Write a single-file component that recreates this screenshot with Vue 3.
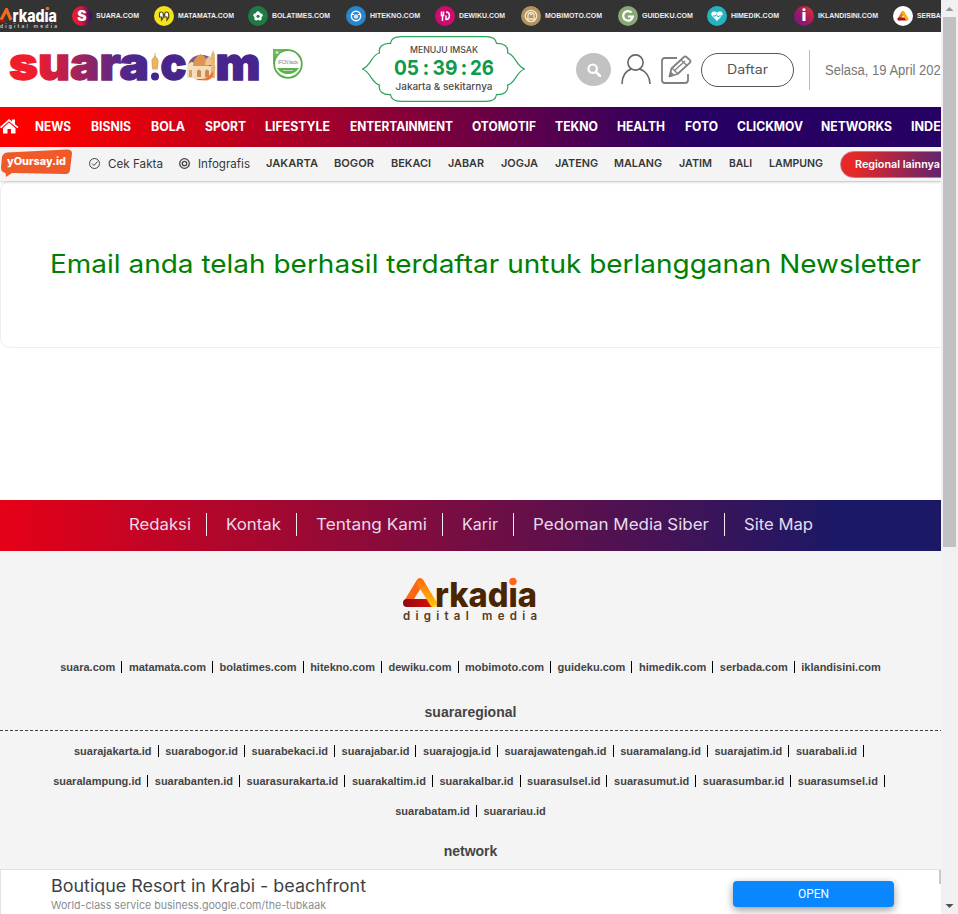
<script setup>
import { h } from 'vue'

// One line of text set to an exact width.
const Fit = (p) =>
  h('svg', { width: p.w, height: p.h || 20, style: 'display:block;overflow:visible;flex:none' }, [
    h('text', { x: 0, y: p.y || 14, textLength: p.w, lengthAdjust: 'spacingAndGlyphs', fill: 'currentColor' }, p.t),
  ])
Fit.props = ['t', 'w', 'h', 'y']

const network = [
  { t: 'SUARA.COM', w: 43, cell: 82, k: 'suara' },
  { t: 'MATAMATA.COM', w: 56, cell: 94, k: 'mata' },
  { t: 'BOLATIMES.COM', w: 58, cell: 98, k: 'bola' },
  { t: 'HITEKNO.COM', w: 50, cell: 89, k: 'hitekno' },
  { t: 'DEWIKU.COM', w: 46, cell: 86, k: 'dewiku' },
  { t: 'MOBIMOTO.COM', w: 57, cell: 97, k: 'mobi' },
  { t: 'GUIDEKU.COM', w: 51, cell: 89, k: 'guide' },
  { t: 'HIMEDIK.COM', w: 48, cell: 87, k: 'himedik' },
  { t: 'IKLANDISINI.COM', w: 60, cell: 99, k: 'iklan' },
  { t: 'SERBADA.COM', w: 51, cell: 90, k: 'serbada' },
]
const fills = {
  suara: 'url(#gs)', mata: '#f6e21c', bola: '#1f7a45', hitekno: '#2a86cc', dewiku: '#cf0a72',
  mobi: '#b3935c', guide: '#8aa873', himedik: '#25b3bd', iklan: 'url(#gi)', serbada: '#fff',
}
const nav = [
  ['NEWS', 36, 56], ['BISNIS', 40, 60], ['BOLA', 34, 54], ['SPORT', 41, 60], ['LIFESTYLE', 65, 85],
  ['ENTERTAINMENT', 103, 122], ['OTOMOTIF', 64, 83], ['TEKNO', 43, 62], ['HEALTH', 48, 68],
  ['FOTO', 33, 52], ['CLICKMOV', 66, 84], ['NETWORKS', 71, 90], ['INDEKS', 47, 60],
]
const regions = [
  ['JAKARTA', 52, 68], ['BOGOR', 40, 57], ['BEKACI', 40, 57], ['JABAR', 36, 53], ['JOGJA', 37, 54],
  ['JATENG', 43, 59], ['MALANG', 48, 65], ['JATIM', 33, 50], ['BALI', 23, 40], ['LAMPUNG', 54, 71],
]
const info = [['Redaksi', 62], ['Kontak', 55], ['Tentang Kami', 111], ['Karir', 36], ['Pedoman Media Siber', 176], ['Site Map', 69]]
const sites = ['suara.com', 'matamata.com', 'bolatimes.com', 'hitekno.com', 'dewiku.com', 'mobimoto.com', 'guideku.com', 'himedik.com', 'serbada.com', 'iklandisini.com']
const regional = [
  ['suarajakarta.id', 'suarabogor.id', 'suarabekaci.id', 'suarajabar.id', 'suarajogja.id', 'suarajawatengah.id', 'suaramalang.id', 'suarajatim.id', 'suarabali.id'],
  ['suaralampung.id', 'suarabanten.id', 'suarasurakarta.id', 'suarakaltim.id', 'suarakalbar.id', 'suarasulsel.id', 'suarasumut.id', 'suarasumbar.id', 'suarasumsel.id'],
  ['suarabatam.id', 'suarariau.id'],
]
</script>

<template>
  <div class="window">
    <div class="page">
      <div class="topbar">
        <svg class="toplogo" width="58" height="24" viewBox="0 0 58 24">
          <path d="M1 15 6.500 4.500 11 15" fill="none" stroke="#f26a1d" stroke-width="3.200" stroke-linejoin="round" />
          <path d="M-1 16H5" stroke="#b3130b" stroke-width="2.500" />
          <text x="12.500" y="16.500" class="heavy" font-size="17" textLength="44.500" lengthAdjust="spacingAndGlyphs" fill="#fff">rkadıa</text>
          <circle cx="47.500" cy="3.500" r="1.800" fill="#f26a1d" />
          <text x="0" y="23" class="small" font-size="5" textLength="57" fill="#ccc">digital media</text>
        </svg>
        <div v-for="n in network" :key="n.k" class="net" :style="{ width: n.cell + 'px' }">
          <svg width="20" height="20" viewBox="0 0 20 20">
            <defs>
              <linearGradient id="gs"><stop stop-color="#f01c2c" /><stop offset=".45" stop-color="#d81940" /><stop offset="1" stop-color="#271064" /></linearGradient>
              <linearGradient id="gi" x1="0" y1="1" x2="1" y2="0"><stop stop-color="#6b178d" /><stop offset=".5" stop-color="#a3195f" /><stop offset="1" stop-color="#ef3527" /></linearGradient>
            </defs>
            <circle cx="10" cy="10" r="10" :fill="fills[n.k]" />
            <text v-if="n.k === 'suara'" x="10" y="15" class="glyph" font-size="14">S</text>
            <g v-else-if="n.k === 'mata'">
              <path d="M5.500 7.500q0-1.500 1.800-1.500T9.300 8v3.500L7.500 14V11H5.500zM10.700 7.500q0-1.500 1.800-1.500T14.700 8v3.500L13 14V11h-2.300z" fill="#fff" stroke="#4b4718" stroke-width="1.200" />
            </g>
            <g v-else-if="n.k === 'bola'" fill="#fff">
              <circle cx="10" cy="7.300" r="2" /><circle cx="12.700" cy="9.200" r="2" /><circle cx="11.700" cy="12.500" r="2" /><circle cx="8.300" cy="12.500" r="2" /><circle cx="7.300" cy="9.200" r="2" />
              <circle cx="10" cy="10.200" r="1.500" fill="#1f7a45" />
            </g>
            <g v-else-if="n.k === 'hitekno'" fill="none" stroke="#fff">
              <circle cx="10" cy="10" r="4.700" stroke-width="1.500" /><circle cx="10" cy="10.500" r="2.300" fill="#cfe6f7" stroke="none" /><path d="M6 8.500h2M12 8.500h2" stroke-width="1.200" />
            </g>
            <path v-else-if="n.k === 'dewiku'" d="M6.500 5.500v4h2v-4M7.500 9v6M11 6c4.500 0 4.500 7.500 0 7.500V9.500" fill="none" stroke="#fff" stroke-width="1.500" />
            <g v-else-if="n.k === 'mobi'" fill="none" stroke="#f3e8cf" stroke-width="1.300">
              <circle cx="10" cy="10" r="5.700" /><path d="M7 12V9.500a3 3 0 0 1 6 0V12M5 13h10M9 8.500h2" />
            </g>
            <path v-else-if="n.k === 'guide'" d="M13.500 6.500A4.800 4.800 0 1 0 14.800 10.500H10" fill="none" stroke="#fff" stroke-width="2.200" />
            <g v-else-if="n.k === 'himedik'">
              <path d="M10 15 5 10C2.500 6.500 7.500 3.800 10 7c2.500-3.200 7.500-.5 5 3z" fill="#fff" /><path d="M6 10h2.500l1-1.500 1.500 2.500 1-1h4" fill="none" stroke="#25b3bd" />
            </g>
            <text v-else-if="n.k === 'iklan'" x="10" y="15" class="glyph" font-size="15">i</text>
            <g v-else fill="none" stroke-width="3" stroke-linejoin="round" stroke-linecap="round">
              <path d="M6 13 10 6.500" stroke="#f26a1d" /><path d="M6 13h7" stroke="#a51612" /><path d="M10 6.500 14 13" stroke="#f7ae12" />
            </g>
          </svg>
          <Fit :t="n.t" :w="n.w" :h="12" :y="8" />
        </div>
      </div>

      <header class="header">
        <svg class="brand" width="264" height="44" viewBox="0 0 264 44">
          <defs>
            <linearGradient id="gb" gradientUnits="userSpaceOnUse" x1="0" y1="0" x2="140" y2="0"><stop offset=".18" stop-color="#f01d2c" /><stop offset=".8" stop-color="#57278a" /><stop offset="1" stop-color="#47258c" /></linearGradient>
          </defs>
          <text x="0" y="33.500" class="brandtext" textLength="140" lengthAdjust="spacingAndGlyphs" fill="url(#gb)" stroke="url(#gb)">suara</text>
          <circle cx="146" cy="30.500" r="4" fill="#47258c" />
          <path d="M146 7v3m-3 4 3-4 3 4-.5 8h-5zm0 9h6" fill="#efb556" stroke="#d9a45a" />
          <text x="151.500" y="33.500" class="brandtext" textLength="26" lengthAdjust="spacingAndGlyphs" fill="#47258c" stroke="#47258c">c</text>
          <text x="177.500" y="33.500" class="brandtext" textLength="30" lengthAdjust="spacingAndGlyphs" fill="#7a5a90">o</text>
          <path d="M178 32V20q5-8 10 0v12z" fill="#f4dfbe" />
          <path d="M184 20q0-8 7.500-12 8.500 4 8.500 12z" fill="#dd9650" />
          <path d="M185 20h17v13h-17z" fill="#f5dcb8" />
          <path d="M196 19q0-7 5-9l3 9z" fill="#f0c48c" />
          <path d="M202 32V9l2-5 2 5v23z" fill="#e6b679" />
          <path d="M188 31v-6q2-3 4 0v6m4 0v-6q2-3 4 0v6" fill="#c98a50" />
          <path d="M180 24h3v7h-3z" fill="#d9a268" />
          <path d="M186 34q13 0 18-9 2 7-6 9.500z" fill="#ed7639" />
          <text x="206.500" y="33.500" class="brandtext" textLength="45" lengthAdjust="spacingAndGlyphs" fill="#47258c" stroke="#47258c">m</text>
        </svg>
        <svg class="badge" width="30" height="30" viewBox="0 0 30 30">
          <path d="M0 0h15v8L3 15H0z" fill="#69b957" />
          <circle cx="15" cy="15" r="13.800" fill="#fff" stroke="#58ad4b" stroke-width="1.800" />
          <path d="M4 19h22q-4 6-11 6T4 19z" fill="#5cb14d" />
          <path d="M1 1h9L2 9z" fill="#69b957" />
          <text x="5" y="15" font-size="5" textLength="20" fill="#888" class="arial">IFCN facts</text>
          <path d="M10 21.500h10" stroke="#b8e0af" /><circle cx="4" cy="3.500" r="1.500" fill="#cde9c7" />
        </svg>
        <div class="timer">
          <svg width="163" height="66" viewBox="0 0 163 66">
            <path d="M.5 33C9 30 10 18 17.500 17 16 11 21 7 28.500 7.500 29 3 33 .7 39 .7h85c6 0 10 2.300 10.500 6.800 7.500-.5 12.500 3.500 11 9.500C153 18 154 30 162.500 33 154 36 153 48 145.500 49c1.500 6-3.500 10-11 9.500-.5 4.500-4.500 6.800-10.500 6.800H39c-6 0-10-2.300-10.500-6.800C21 59 16 55 17.500 49 10 48 9 36 .5 33z" fill="#fff" stroke="#2aa25c" stroke-width="1.200" />
            <g class="sans" fill="#4a4a4a">
              <text x="48" y="17" font-size="8.800" font-weight="500" textLength="68" lengthAdjust="spacingAndGlyphs">MENUJU IMSAK</text>
              <text x="33.500" y="54" font-size="9.300" font-weight="500" textLength="97" lengthAdjust="spacingAndGlyphs">Jakarta &amp; sekitarnya</text>
            </g>
            <g class="sans" fill="#0f9a4b" font-size="20.500" font-weight="700">
              <text x="32" y="39" textLength="25" lengthAdjust="spacingAndGlyphs">05</text>
              <text x="60.500" y="39">:</text>
              <text x="70.500" y="39" textLength="25" lengthAdjust="spacingAndGlyphs">39</text>
              <text x="98.500" y="39">:</text>
              <text x="108" y="39" textLength="24" lengthAdjust="spacingAndGlyphs">26</text>
            </g>
          </svg>
        </div>
        <div class="search">
          <svg width="14" height="14" viewBox="0 0 14 14" fill="none" stroke="#fff"><circle cx="5.700" cy="5.700" r="4.200" stroke-width="2.200" /><path d="m9 9 4 4" stroke-width="2.600" stroke-linecap="round" /></svg>
        </div>
        <svg class="user" width="30" height="31" viewBox="0 0 30 31" fill="none" stroke="#666" stroke-width="1.600"><circle cx="14.500" cy="8.500" r="7.600" /><path d="M1 30c0-8 4-13.500 9.500-15M18.500 15C25 17 29 23 29 30" /></svg>
        <svg class="edit" width="31" height="30" viewBox="0 0 31 30" fill="none" stroke="#808080" stroke-width="1.800" stroke-linejoin="round">
          <path d="M16 3H4Q1 3 1 6v19q0 3 3 3h20q3 0 3-3V19" /><path d="m8.500 21.500 2-8L23 2q1-1.400 2.500 0L29 5.200q1 1.300 0 2.400L16.500 19z" /><path d="m11 13 6 6m3-14 6 5.500M13 16 24 6" stroke-width="1.300" /><path d="m9 21 1-3 2 2z" fill="#808080" />
        </svg>
        <a class="daftar"><Fit t="Daftar" :w="41" :h="18" :y="13" /></a>
        <div class="date"><Fit t="Selasa, 19 April 2022" :w="123" :h="20" :y="14.500" /></div>
      </header>

      <nav class="nav">
        <svg class="home" width="19" height="15" viewBox="0 0 19 15" fill="#fff"><path d="M0 8 9 0l3 2.600V.5h3V5.300L18.500 8l-1.200 1.300L9 2.300 1.200 9.300z" /><path d="m9 3.600 6.500 5.600V14.500H11V10H7.500v4.500H3V9z" /></svg>
        <div v-for="n in nav" :key="n[0]" class="cell" :style="{ width: n[2] + 'px' }"><Fit :t="n[0]" :w="n[1]" :h="20" :y="14" /></div>
      </nav>

      <div class="subnav">
        <svg class="yoursay" width="73" height="28" viewBox="0 0 73 28">
          <path d="M2 8Q3 4 7 3.500L67 .5q5 0 5 4L70 21q-.5 4.500-5 4L12 24l-6 4-.5-4Q.5 23 1 18z" fill="#f05a28" />
          <text x="7" y="16" class="heavy" font-size="10.500" textLength="59" lengthAdjust="spacingAndGlyphs" fill="#fff">yOursay.id</text>
        </svg>
        <svg class="ico" width="11" height="11" viewBox="0 0 11 11" fill="none" stroke="#444"><circle cx="5.500" cy="5.500" r="5" /><path d="m3 5.500 2 2L8.500 3.500" /></svg>
        <div class="light cek"><Fit t="Cek Fakta" :w="55" :y="13.500" /></div>
        <svg class="ico" width="11" height="11" viewBox="0 0 11 11" fill="none" stroke="#444" stroke-width="1.300"><circle cx="5.500" cy="5.500" r="4.800" /><circle cx="5.500" cy="5.500" r="2.200" /></svg>
        <div class="light inf"><Fit t="Infografis" :w="52" :y="13.500" /></div>
        <div v-for="r in regions" :key="r[0]" class="cell" :style="{ width: r[2] + 'px' }"><Fit :t="r[0]" :w="r[1]" :y="13" /></div>
        <a class="more"><Fit t="Regional lainnya" :w="85" :y="13.500" /></a>
      </div>

      <main>
        <section class="card"><Fit t="Email anda telah berhasil terdaftar untuk berlangganan Newsletter" :w="871" :h="40" :y="28" /></section>
      </main>

      <nav class="info">
        <div v-for="i in info" :key="i[0]" class="infoitem"><Fit :t="i[0]" :w="i[1]" :h="24" :y="17" /></div>
      </nav>

      <footer class="footer">
        <svg class="arkadia" width="135" height="48" viewBox="0 0 135 48">
          <defs><linearGradient id="ga"><stop stop-color="#8c0710" /><stop offset="1" stop-color="#dc1409" /></linearGradient><linearGradient id="go" x1="0" y1="0" x2="0" y2="1"><stop stop-color="#ff6b0b" /><stop offset="1" stop-color="#ffc807" /></linearGradient></defs>
          <path d="M17 5 5.500 24" stroke="#ff6714" stroke-width="7.500" stroke-linecap="round" />
          <rect x="0" y="22" width="31" height="8" rx="4" fill="url(#ga)" />
          <path d="M13.500 6q3-7 8-1l12 20q1 5-4 5-2-1-3-3z" fill="url(#go)" />
          <text x="32" y="29.500" class="heavy" font-size="34" textLength="102" lengthAdjust="spacingAndGlyphs" fill="#4b2500">rkadıa</text>
          <circle cx="110" cy="4.500" r="3.700" fill="#ff681b" />
          <text x="0" y="43" class="small" font-size="11.500" textLength="134" fill="#5a3a1c">digital media</text>
        </svg>
        <div class="links"><template v-for="(s, i) in sites" :key="s"><a>{{ s }}</a><i v-if="i < sites.length - 1"></i></template></div>
        <h3 class="regional">suararegional</h3>
        <svg class="dash" width="941" height="1"><path d="M0 .5H941" stroke="#444" stroke-dasharray="3 2" /></svg>
        <div v-for="(row, r) in regional" :key="r" class="links">
          <template v-for="(s, i) in row" :key="s"><a>{{ s }}</a><i v-if="r < 2 || i === 0"></i></template>
        </div>
        <h3 class="network">network</h3>
      </footer>

      <aside class="ad">
        <div class="adcopy">
          <div class="adtitle"><Fit t="Boutique Resort in Krabi - beachfront" :w="315" :h="24" :y="18" /></div>
          <div class="adsub"><Fit t="World-class service business.google.com/the-tubkaak" :w="275" :h="16" :y="11" /></div>
        </div>
        <a class="open"><Fit t="OPEN" :w="31" :h="16" :y="12" /></a>
        <span class="choice"></span>
      </aside>
    </div>
    <div class="scroll">
      <svg width="17" height="17"><path d="m4.500 11 4-4 4 4z" fill="#999" /></svg>
      <div class="thumb"></div>
      <svg width="17" height="17"><path d="m4.500 7 4 4 4-4z" fill="#505050" /></svg>
    </div>
  </div>
</template>

<style>
body { background: #fff; overflow: hidden; }
</style>

<style scoped>
.window { display: flex; width: 958px; height: 914px; font-family: Inter, sans-serif; overflow: hidden; }
.page { position: relative; width: 941px; height: 914px; overflow: hidden; background: #fff; }
.sans { font-family: Inter, sans-serif; }
.arial { font-family: "Liberation Sans", sans-serif; }
.heavy { font-family: Inter, sans-serif; font-weight: 800; }
.small { font-family: Inter, sans-serif; font-weight: 600; }
.glyph { font-family: Inter, sans-serif; font-weight: 900; fill: #fff; text-anchor: middle; }
.topbar { display: flex; align-items: center; height: 32px; background: #333; color: #eee; font: 700 8px "Liberation Sans", sans-serif; }
.toplogo { flex: none; margin: 2px 14px 0 0; }
.net { display: flex; align-items: center; gap: 4px; flex: none; }
.header { display: flex; align-items: center; height: 75px; }
.brand { flex: none; margin: -4px 0 0 9px; overflow: visible; }
.brandtext { font-family: Inter, sans-serif; font-weight: 900; font-size: 46px; stroke-width: 1.3px; }
.badge { flex: none; margin: -11px 59px 0 0; }
.timer { flex: none; height: 66px; margin: -2px 51px 0 0; }
.search { display: flex; align-items: center; justify-content: center; flex: none; width: 35px; height: 33px; border-radius: 50%; background: #c2c2c2; }
.user { flex: none; margin-left: 10px; }
.edit { flex: none; margin: 0 9px 0 10px; }
.daftar { display: flex; align-items: center; justify-content: center; flex: none; box-sizing: border-box; width: 93px; height: 34px; border: 1px solid #555; border-radius: 17px; color: #555; font-size: 12.500px; }
.date { display: flex; align-items: center; flex: none; height: 40px; margin-left: 15px; padding-left: 15px; border-left: 1px solid #bbb; color: #777; font: 14px "Liberation Sans", sans-serif; }
.nav { display: flex; align-items: center; height: 40px; color: #fff; font-weight: 700; font-size: 12.500px; background: linear-gradient(90deg, #f00 5%, #270064 73%); }
.home { flex: none; margin: -2px 16px 0 0; }
.cell { flex: none; }
.subnav { position: relative; display: flex; align-items: center; height: 34px; background: #f4f4f4; color: #383838; font-weight: 600; font-size: 11px; box-shadow: 0 1px 3px #0003; }
.yoursay { flex: none; margin: -2px 16px 0 0; }
.ico { flex: none; margin: -2px 8px 0 0; }
.light { flex: none; font-weight: 400; font-size: 11.500px; }
.cek { margin-right: 16px; }
.inf { margin-right: 16px; }
.more { display: flex; align-items: center; flex: none; box-sizing: border-box; width: 126px; height: 27px; padding-left: 14px; border: 1px solid #c77597; border-radius: 14px; color: #fff; font-size: 10.500px; background: linear-gradient(90deg, #e62926 10%, #3f2282); }
main { height: 319px; }
.card { box-sizing: border-box; width: 970px; height: 167px; padding: 63px 49px 0; border: 1px solid #eee; border-radius: 10px; color: #008000; font-size: 25.500px; }
.info { display: flex; align-items: center; justify-content: center; height: 51px; color: #e4dcec; font-size: 16px; background: linear-gradient(90deg, #e60017, #1b1866 89%); }
.infoitem { height: 23px; padding: 0 15px 0 19px; border-right: 1px solid #eee; margin-top: -2px; }
.infoitem:first-child { padding-left: 4px; }
.infoitem:last-child { padding: 0 3px 0 19px; border: 0; }
.footer { display: flex; flex-direction: column; align-items: center; height: 363px; background: #f4f4f4; color: #444; }
.arkadia { flex: none; margin: 26px 0 27px; overflow: visible; }
.links { display: flex; align-items: center; justify-content: center; height: 30px; font: 700 11px "Liberation Sans", sans-serif; }
.links i { width: 1px; height: 12px; margin: 0 6.600px 0 6px; background: #000; }
.links i:last-child { margin-right: 3px; }
h3 { margin: 0; font: 700 14px/20px "Liberation Sans", sans-serif; }
.regional { margin: 20px 0 8px; }
.dash { flex: none; margin-bottom: 5px; }
.network { margin-top: 15px; }
.ad { position: absolute; left: 0; top: 869px; display: flex; justify-content: space-between; box-sizing: border-box; width: 941px; height: 45px; border: solid #e2e2e2; border-width: 1px 0 0 1px; background: #fff; }
.adcopy { padding: 4px 0 0 50px; }
.adtitle { height: 24px; color: #3c4043; font-size: 17px; }
.adsub { color: #8a8d91; font-size: 11px; }
.open { display: flex; align-items: center; justify-content: center; width: 161px; height: 26px; margin: 11px 47px 0 0; border-radius: 4px; color: #fff; font: 12.500px Roboto, sans-serif; background: #0a87ff; box-shadow: 0 3px 9px #0006; }
.choice { position: absolute; right: 0; top: 0; width: 2px; height: 14px; background: #c4cccf; }
.scroll { display: flex; flex-direction: column; align-items: center; width: 17px; height: 914px; background: #f1f1f1; }
.thumb { width: 13px; height: 530px; margin-bottom: auto; background: #c1c1c1; }
</style>
